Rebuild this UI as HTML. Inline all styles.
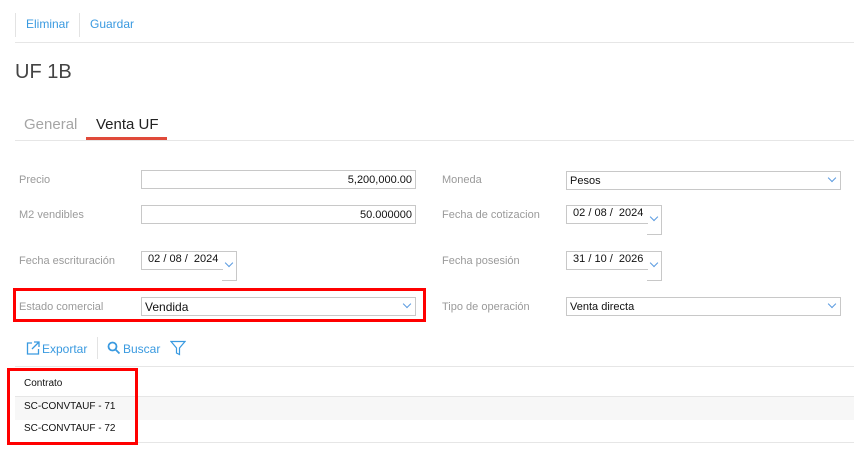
<!DOCTYPE html>
<html><head><meta charset="utf-8"><style>
*{margin:0;padding:0;box-sizing:border-box}
body{width:854px;height:476px;background:#fff;font-family:"Liberation Sans",sans-serif;position:relative;overflow:hidden}
.a{position:absolute;white-space:nowrap}
.lbl{font-size:11px;color:#9a9a9a;line-height:12px}
.inp{position:absolute;border:1px solid #c8c8c8;height:19px;font-size:11px;color:#111;line-height:18px;padding:0 3px}
.chev{position:absolute;width:6px;height:6px;border-right:1px solid #5b9be0;border-bottom:1px solid #5b9be0;transform:rotate(45deg)}
.blue{color:#3a9ae0}
</style></head><body>
<div class="a" style="left:15px;top:13px;width:1px;height:24px;background:#e3e3e3"></div>
<div class="a blue" style="left:26px;top:17px;font-size:12px">Eliminar</div>
<div class="a" style="left:79px;top:13px;width:1px;height:24px;background:#e3e3e3"></div>
<div class="a blue" style="left:90px;top:17px;font-size:12px">Guardar</div>
<div class="a" style="left:15px;top:42px;width:839px;height:1px;background:#e6e6e6"></div>
<div class="a" style="left:15px;top:61px;font-size:20px;color:#444;font-weight:300">UF 1B</div>
<div class="a" style="left:24px;top:116px;font-size:15px;color:#a5a5a5">General</div>
<div class="a" style="left:96px;top:116px;font-size:15px;color:#222">Venta UF</div>
<div class="a" style="left:15px;top:140px;width:839px;height:1px;background:#e6e6e6"></div>
<div class="a" style="left:86px;top:137px;width:81px;height:3px;background:#e04a3a"></div>

<div class="a lbl" style="left:19px;top:174px">Precio</div>
<div class="inp" style="left:141px;top:170px;width:275px;text-align:right">5,200,000.00</div>
<div class="a lbl" style="left:19px;top:209px">M2 vendibles</div>
<div class="inp" style="left:141px;top:205px;width:275px;text-align:right">50.000000</div>
<div class="a lbl" style="left:19px;top:255px">Fecha escrituración</div>
<div class="inp" style="left:141px;top:251px;width:82px;border-right:none;line-height:14px">&nbsp;02 / 08 /&nbsp; 2024</div>
<div class="a" style="left:222px;top:251px;width:15px;height:30px;border:1px solid #c8c8c8;border-left:none"></div>
<div class="chev" style="left:226px;top:260px"></div>
<div class="a" style="left:13px;top:288px;width:413px;height:34px;border:3px solid #f00"></div>
<div class="a lbl" style="left:19px;top:301px">Estado comercial</div>
<div class="inp" style="left:141px;top:297px;width:275px;font-size:12px">Vendida</div>
<div class="chev" style="left:404px;top:301px"></div>

<div class="a lbl" style="left:442px;top:174px">Moneda</div>
<div class="inp" style="left:566px;top:171px;width:275px">Pesos</div>
<div class="chev" style="left:829px;top:175px"></div>
<div class="a lbl" style="left:442px;top:209px">Fecha de cotizacion</div>
<div class="inp" style="left:566px;top:205px;width:82px;border-right:none;line-height:14px">&nbsp;02 / 08 /&nbsp; 2024</div>
<div class="a" style="left:647px;top:205px;width:15px;height:30px;border:1px solid #c8c8c8;border-left:none"></div>
<div class="chev" style="left:651px;top:214px"></div>
<div class="a lbl" style="left:442px;top:255px">Fecha posesión</div>
<div class="inp" style="left:566px;top:251px;width:82px;border-right:none;line-height:14px">&nbsp;31 / 10 /&nbsp; 2026</div>
<div class="a" style="left:647px;top:251px;width:15px;height:30px;border:1px solid #c8c8c8;border-left:none"></div>
<div class="chev" style="left:651px;top:260px"></div>
<div class="a lbl" style="left:442px;top:301px">Tipo de operación</div>
<div class="inp" style="left:566px;top:297px;width:275px">Venta directa</div>
<div class="chev" style="left:829px;top:301px"></div>

<svg class="a" style="left:26px;top:341px" width="14" height="14" viewBox="0 0 14 14" fill="none" stroke="#3a9ae0" stroke-width="1.3"><path d="M6 2H1.5v11h11V8"/><path d="M8 1h5v5M13 1L6 8"/></svg>
<div class="a blue" style="left:42px;top:342px;font-size:12px">Exportar</div>
<div class="a" style="left:97px;top:337px;width:1px;height:22px;background:#e3e3e3"></div>
<svg class="a" style="left:107px;top:341px" width="14" height="14" viewBox="0 0 14 14" fill="none" stroke="#3a9ae0" stroke-width="1.8"><circle cx="5.5" cy="5.5" r="4"/><path d="M8.5 8.5L12.5 12.5"/></svg>
<div class="a blue" style="left:123px;top:342px;font-size:12px">Buscar</div>
<svg class="a" style="left:170px;top:340px" width="16" height="16" viewBox="0 0 16 16" fill="none" stroke="#3a9ae0" stroke-width="1.2"><path d="M1 1.5h14L9.5 8v6.5l-3-1.5V8z"/></svg>
<div class="a" style="left:15px;top:366px;width:839px;height:1px;background:#e6e6e6"></div>
<div class="a" style="left:15px;top:396px;width:839px;height:24px;background:#f7f7f7;border-top:1px solid #e6e6e6"></div>
<div class="a" style="left:15px;top:442px;width:839px;height:1px;background:#e6e6e6"></div>
<div class="a" style="left:24px;top:378px;font-size:10px;color:#111">Contrato</div>
<div class="a" style="left:24px;top:401px;font-size:10px;color:#111">SC-CONVTAUF - 71</div>
<div class="a" style="left:24px;top:423px;font-size:10px;color:#111">SC-CONVTAUF - 72</div>
<div class="a" style="left:7px;top:368px;width:131px;height:77px;border:3px solid #f00"></div>
</body></html>
